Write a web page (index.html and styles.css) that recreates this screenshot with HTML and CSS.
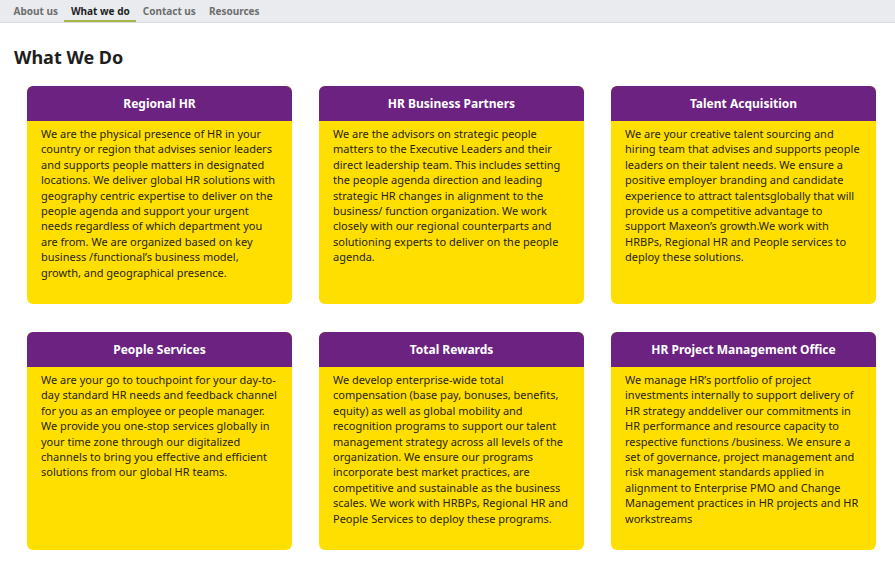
FILE: index.html
```html
<!DOCTYPE html>
<html lang="en">
<head>
<meta charset="utf-8">
<title>What We Do</title>
<link rel="stylesheet" href="styles.css">
</head>
<body>
<nav class="tabs">
  <a class="tab">About us</a>
  <a class="tab active">What we do</a>
  <a class="tab">Contact us</a>
  <a class="tab">Resources</a>
</nav>
<main class="page">
  <h1 class="title">What We Do</h1>
  <div class="grid">
    <section class="card">
      <h2 class="card-head">Regional HR</h2>
      <p class="card-body">We are the physical presence of HR in your country or region that advises senior leaders and supports people matters in designated locations. We deliver global HR solutions with geography centric expertise to deliver on the people agenda and support your urgent needs regardless of which department you are from. We are organized based on key business /functional’s business model, growth, and geographical presence.</p>
    </section>
    <section class="card">
      <h2 class="card-head">HR Business Partners</h2>
      <p class="card-body">We are the advisors on strategic people matters to the Executive Leaders and their direct leadership team. This includes setting the people agenda direction and leading strategic HR changes in alignment to the business/ function organization. We work closely with our regional counterparts and solutioning experts to deliver on the people agenda.</p>
    </section>
    <section class="card">
      <h2 class="card-head">Talent Acquisition</h2>
      <p class="card-body">We are your creative talent sourcing and hiring team that advises and supports people leaders on their talent needs. We ensure a positive employer branding and candidate experience to attract talentsglobally that will provide us a competitive advantage to support Maxeon’s growth.We work with HRBPs, Regional HR and People services to deploy these solutions.</p>
    </section>
    <section class="card">
      <h2 class="card-head">People Services</h2>
      <p class="card-body">We are your go to touchpoint for your day-to-day standard HR needs and feedback channel for you as an employee or people manager. We provide you one-stop services globally in your time zone through our digitalized channels to bring you effective and efficient solutions from our global HR teams.</p>
    </section>
    <section class="card">
      <h2 class="card-head">Total Rewards</h2>
      <p class="card-body">We develop enterprise-wide total compensation (base pay, bonuses, benefits, equity) as well as global mobility and recognition programs to support our talent management strategy across all levels of the organization. We ensure our programs incorporate best market practices, are competitive and sustainable as the business scales. We work with HRBPs, Regional HR and People Services to deploy these programs.</p>
    </section>
    <section class="card">
      <h2 class="card-head">HR Project Management Office</h2>
      <p class="card-body">We manage HR’s portfolio of project investments internally to support delivery of HR strategy anddeliver our commitments in HR performance and resource capacity to respective functions /business. We ensure a set of governance, project management and risk management standards applied in alignment to Enterprise PMO and Change Management practices in HR projects and HR workstreams</p>
    </section>
  </div>
</main>
</body>
</html>
```
FILE: styles.css
```css
* { box-sizing: border-box; }
html, body { margin: 0; padding: 0; background: #fff; }
body {
  font-family: "Noto Sans", "Open Sans", sans-serif;
  color: #222;
  width: 895px;
  height: 567px;
  overflow: hidden;
}
.tabs {
  display: flex;
  height: 23px;
  background: #e9ebee;
  border-bottom: 1px solid #d9dbdf;
  padding-left: 7px;
}
.tab {
  display: block;
  padding: 0 6.5px;
  font-size: 10px;
  font-weight: 700;
  line-height: 22px;
  color: #6e6e6e;
  height: 22px;
}
.tab.active {
  color: #1e1e1e;
  border-bottom: 2px solid #a7b548;
}
.page { padding: 0 14px; }
.title {
  margin: 23px 0 0;
  font-size: 18px;
  line-height: 22px;
  font-weight: 700;
  color: #1e1e1e;
}
.grid {
  display: grid;
  grid-template-columns: repeat(3, 265px);
  column-gap: 27px;
  row-gap: 28px;
  margin-top: 18px;
  padding-left: 13px;
}
.card {
  height: 218px;
  background: #fedf00;
  border-radius: 6px;
  overflow: hidden;
  display: flex;
  flex-direction: column;
}
.card-head {
  margin: 0;
  height: 35px;
  background: #6c2280;
  color: #fff;
  font-size: 12px;
  font-weight: 700;
  line-height: 36px;
  text-align: center;
}
.card-body {
  margin: 0;
  padding: 5px 14px 0;
  font-size: 11px;
  line-height: 15.4px;
  color: #2a2410;
}
```
